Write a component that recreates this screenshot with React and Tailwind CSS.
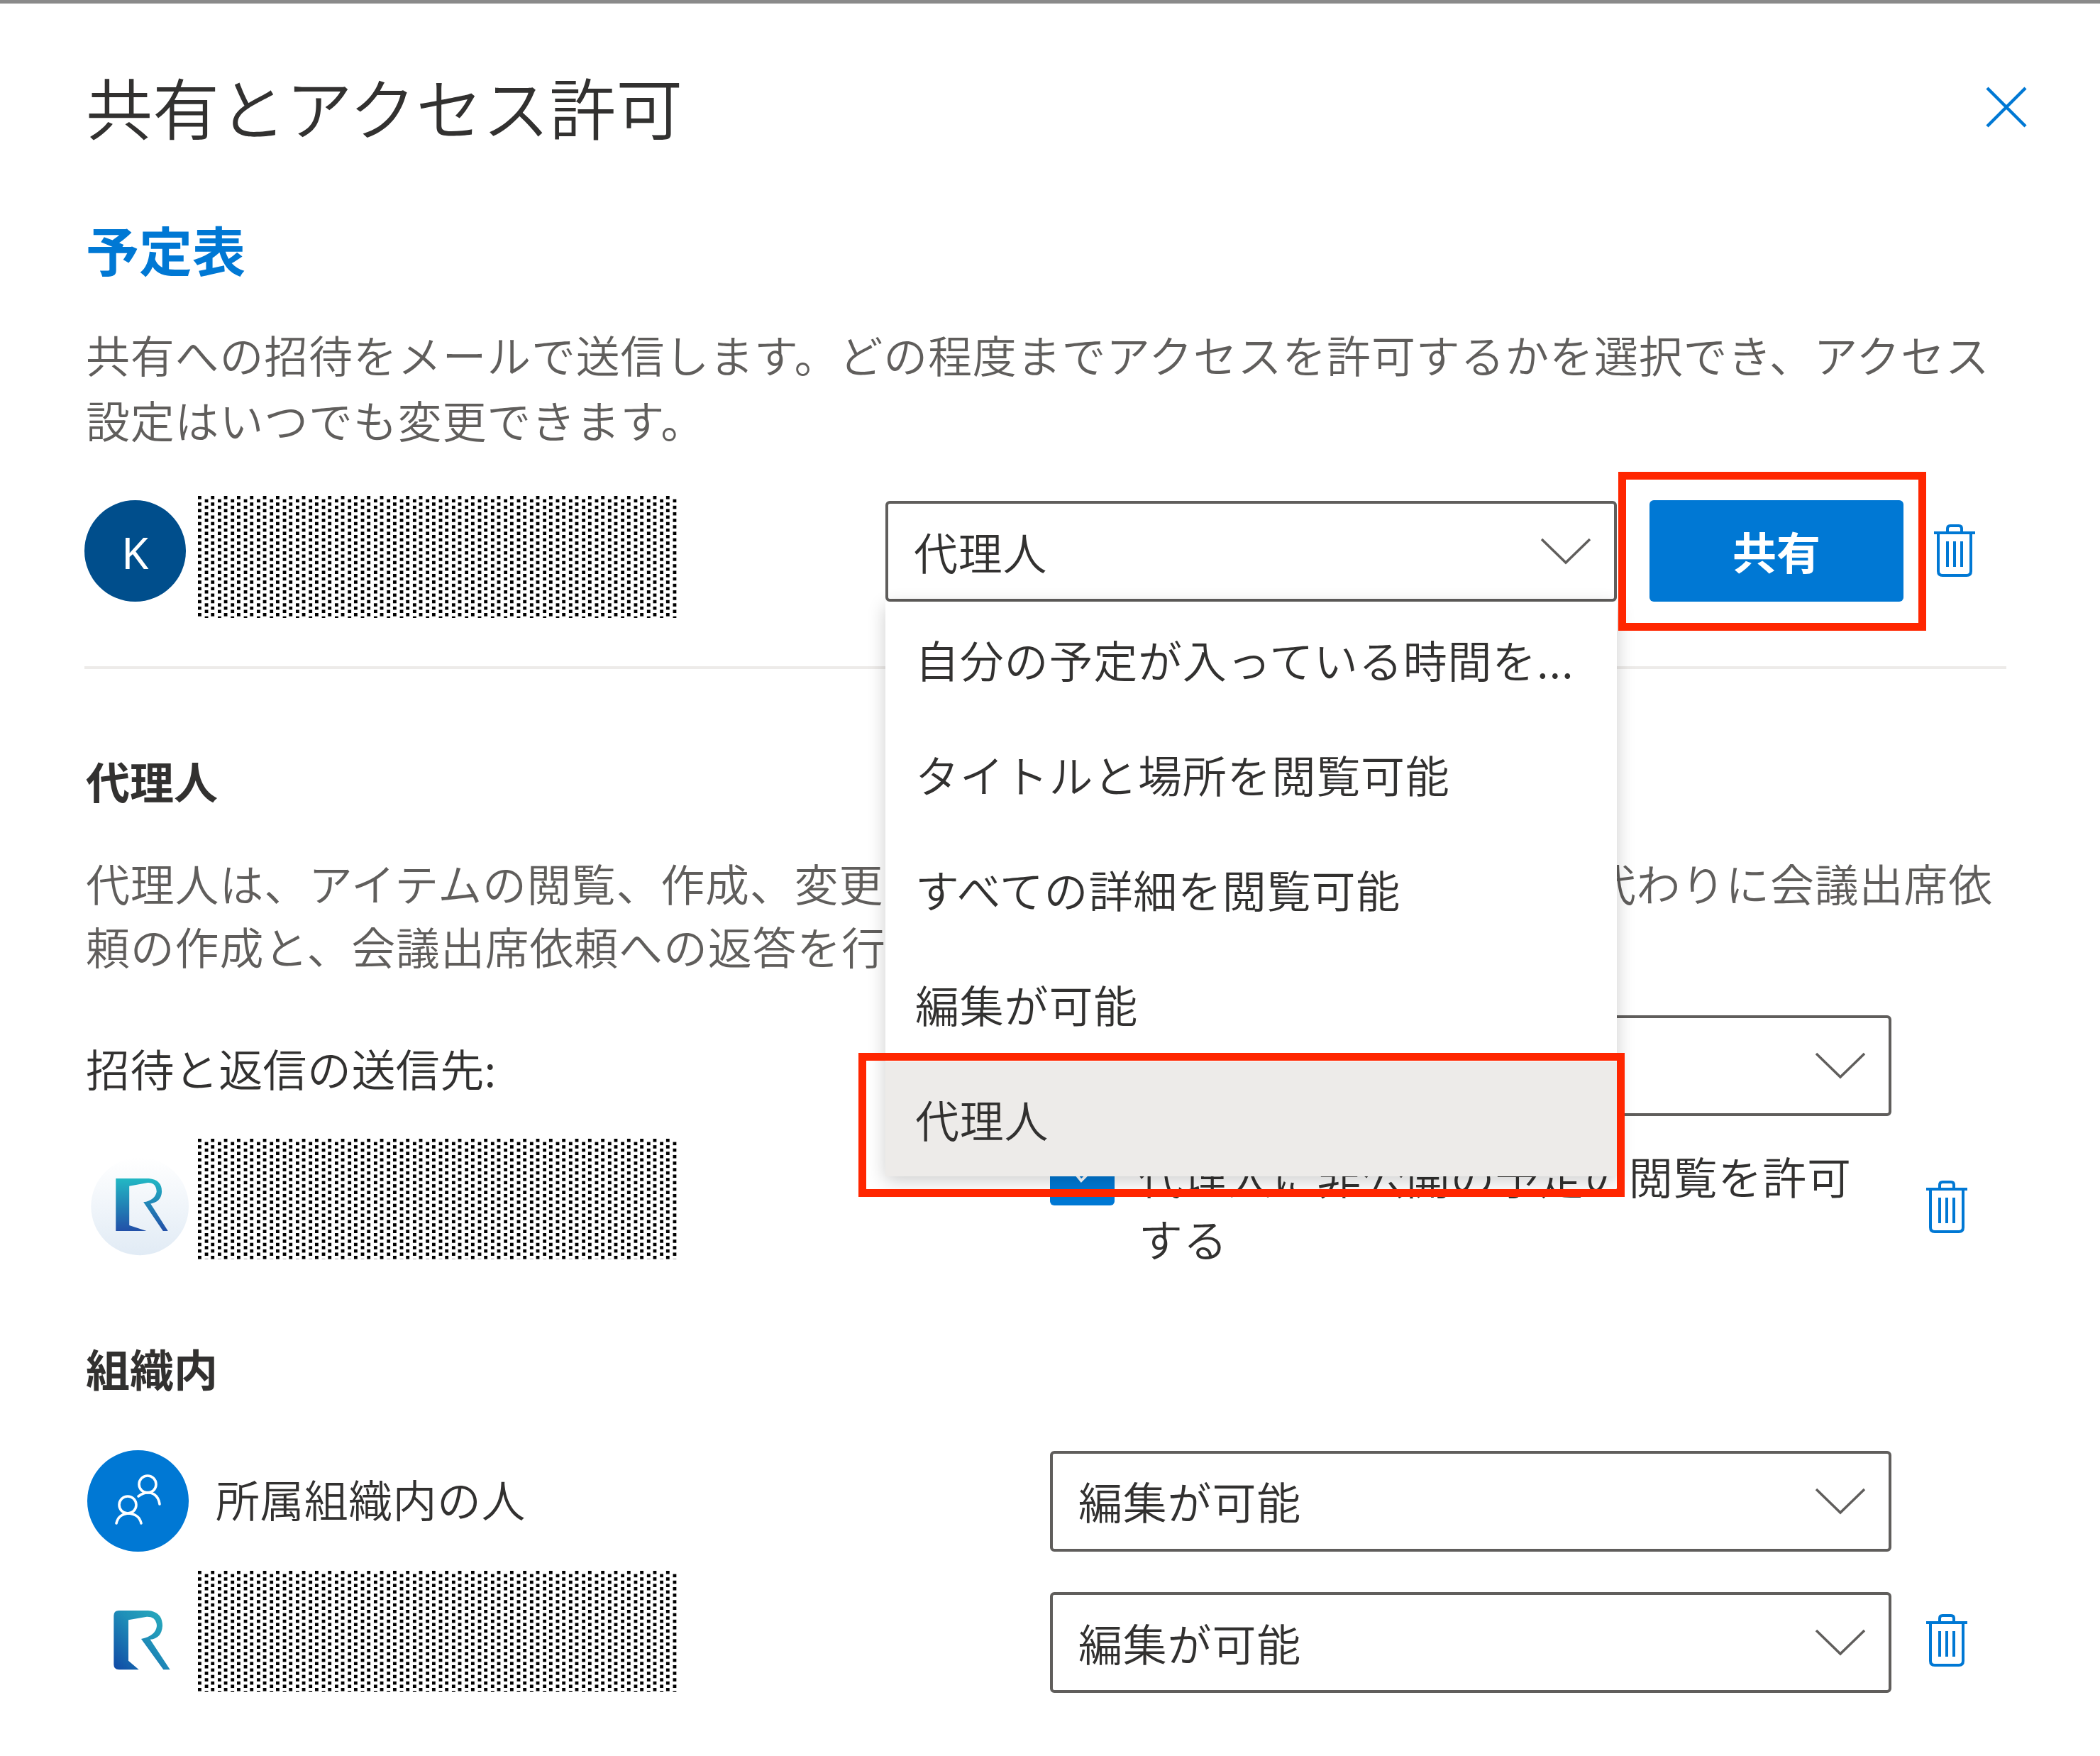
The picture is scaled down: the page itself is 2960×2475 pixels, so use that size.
import { useId } from 'react'

function Chevron() {
  return (
    <svg viewBox="0 0 72 38" className="w-[72px] h-[38px]" fill="none" stroke="#605e5c" strokeWidth="3.5">
      <path d="M2 2 L36 35 L70 2" />
    </svg>
  )
}

function Trash() {
  return (
    <svg viewBox="0 0 58 74" className="w-[58px] h-[74px] shrink-0" fill="none" stroke="#0078d4" strokeWidth="4">
      <path d="M0 12 H58" />
      <path d="M19 12 V6 Q19 2 23 2 H35 Q39 2 39 6 V12" />
      <path d="M6 12 V66 Q6 72 12 72 H46 Q52 72 52 66 V12" />
      <path d="M19 24 V60 M29 24 V60 M39 24 V60" />
    </svg>
  )
}

function Redacted({ className }) {
  const id = useId()
  return (
    <svg className={`w-[676px] shrink-0 bg-white ${className}`} width="676" height="172" shapeRendering="crispEdges">
      <defs>
        <pattern id={id} width="18.33" height="9.17" patternUnits="userSpaceOnUse">
          <rect x="0" y="0" width="5" height="5" fill="#000" />
          <rect x="9.17" y="4.58" width="5" height="5" fill="#000" />
        </pattern>
      </defs>
      <rect width="100%" height="100%" fill={`url(#${id})`} />
    </svg>
  )
}

function Select({ label, className = '', children }) {
  return (
    <div className={`relative h-[142px] border-[4px] border-[#605e5c] rounded-[6px] flex items-center justify-between pl-[36px] pr-[32px] bg-white text-[#323130] ${className}`}>
      <span>{label}</span>
      <Chevron />
      {children}
    </div>
  )
}

function LogoCircle() {
  const id = useId()
  return (
    <svg viewBox="130 160 430 420" className="w-[143px] h-[140px] shrink-0">
      <defs>
        <linearGradient id={id + 'a'} x1="0" y1="0" x2="0" y2="1">
          <stop offset="0" stopColor="#ffffff" />
          <stop offset="1" stopColor="#e1ebf5" />
        </linearGradient>
        <linearGradient id={id + 'b'} x1="0" y1="0" x2="0" y2="1">
          <stop offset="0" stopColor="#22b8c4" />
          <stop offset="1" stopColor="#2250a8" />
        </linearGradient>
      </defs>
      <circle cx="347" cy="368" r="207" fill={`url(#${id}a)`} />
      <path
        d="M245 250 H385 Q440 255 440 305 Q438 352 385 357 L362 350 Q412 342 418 305 Q415 266 380 268 L302 282 V448 L375 472 H245 Z M362 350 L388 350 L466 472 H445 Z"
        fill={`url(#${id}b)`}
      />
    </svg>
  )
}

function LogoPlain() {
  const id = useId()
  return (
    <svg viewBox="250 750 238 252" className="w-[80px] h-[84px] shrink-0">
      <defs>
        <linearGradient id={id} x1="0" y1="1" x2="1" y2="0">
          <stop offset="0" stopColor="#0f48a5" />
          <stop offset="0.55" stopColor="#1f8fb8" />
          <stop offset="1" stopColor="#2ab0bd" />
        </linearGradient>
      </defs>
      <path
        d="M272 750 H395 Q456 755 456 815 Q452 868 405 872 L366 870 Q428 856 432 815 Q430 775 390 776 L312 790 V962 L356 1000 H272 Q250 1000 250 978 V772 Q250 750 272 750 Z M366 870 L400 866 L488 1000 H460 Z"
        fill={`url(#${id})`}
      />
    </svg>
  )
}

function PeopleIcon() {
  return (
    <svg viewBox="0 0 143 143" className="w-[143px] h-[143px] shrink-0">
      <circle cx="71.5" cy="71.5" r="71.5" fill="#0078d4" />
      <g fill="none" stroke="#fff" strokeWidth="3.6" strokeLinecap="round">
        <circle cx="85" cy="48" r="12" />
        <path d="M72 65 Q84 56 94 62 Q101 67 102 76" />
        <circle cx="57" cy="77" r="12" />
        <path d="M41 103 Q44 90 58 89 Q73 90 76 103" />
      </g>
    </svg>
  )
}

const options = ['自分の予定が入っている時間を...', 'タイトルと場所を閲覧可能', 'すべての詳細を閲覧可能', '編集が可能', '代理人']

export default function App() {
  return (
    <div className="relative w-[2960px] h-[2475px] overflow-hidden bg-white border-t-[5px] border-[#8a8a8a] px-[119px] pt-[70px] text-[62px] font-[350] tracking-[0.8px] text-[#605e5c] font-['Noto_Sans_CJK_JP','Noto_Sans',sans-serif]">
      <div className="flex items-center justify-between h-[152px] pl-[2px]">
        <h1 className="text-[94px] font-[350] text-[#323130] leading-none tracking-normal -mt-[4px]">共有とアクセス許可</h1>
        <svg viewBox="0 0 58 58" className="w-[58px] h-[58px] mr-[-16px]" fill="none" stroke="#0078d4" strokeWidth="4.5">
          <path d="M2 2 L56 56 M56 2 L2 56" />
        </svg>
      </div>

      <h2 className="mt-[84px] h-[80px] pl-[2px] flex items-center text-[75px] font-bold text-[#0078d4] tracking-normal">予定表</h2>

      <p className="mt-[62px] pl-[2px] leading-[92px]">
        共有への招待をメールで送信します。どの程度までアクセスを許可するかを選択でき、アクセス設定はいつでも変更できます。
      </p>

      <div className="mt-[60px] flex h-[174px]">
        <div className="mt-[8px] w-[143px] h-[143px] pt-[4px] rounded-full bg-[#004e8c] text-white flex items-center justify-center font-['Noto_Sans',sans-serif] font-normal shrink-0">K</div>
        <Redacted className="ml-[17px] mt-[2px] h-[172px]" />
        <Select label="代理人" className="ml-[293px] mt-[9px] w-[1031px] z-10">
          <div className="absolute left-[-4px] right-[-4px] top-[138px] bg-white shadow-[0_6px_24px_rgba(0,0,0,0.2)]">
            {options.map((o, i) => (
              <div key={o} className={`h-[162px] flex items-center pl-[42px] pt-[1px] text-[#323130] ${i === 4 ? 'bg-[#edebe9]' : ''}`}>
                {o}
              </div>
            ))}
          </div>
        </Select>
        <button className="ml-[46px] mt-[8px] w-[358px] h-[143px] rounded-[6px] bg-[#0078d4] text-white font-semibold tracking-normal">共有</button>
        <div className="ml-[43px] mt-[42px]"><Trash /></div>
      </div>

      <div className="mt-[68px] h-[4px] bg-[#edebe9] w-[2709px]" />

      <h3 className="mt-[117px] h-[80px] pl-[2px] flex items-center font-semibold text-[#323130] tracking-normal">代理人</h3>
      <p className="mt-[60px] pl-[2px] leading-[89px]">
        代理人は、アイテムの閲覧、作成、変更、削除ができます。また、あなたの代わりに会議出席依頼の作成と、会議出席依頼への返答を行うことができます。
      </p>

      <div className="mt-[53px] grid grid-cols-[1361px_1186px] items-center">
        <span className="pl-[2px] mt-[6px] text-[#323130] tracking-[0.4px]">招待と返信の送信先:</span>
        <Select label="編集が可能" />
      </div>

      <div className="mt-[32px] flex h-[170px]">
        <div className="ml-[6px] mt-[26px]"><LogoCircle /></div>
        <Redacted className="ml-[11px] h-[170px]" />
        <div className="ml-[525px] mt-[4px] w-[91px] h-[90px] rounded-[6px] bg-[#0078d4] flex items-center justify-center shrink-0">
          <svg viewBox="0 0 60 40" className="w-[60px] h-[40px]" fill="none" stroke="#fff" strokeWidth="4">
            <path d="M10 8 L28 30 L50 8" />
          </svg>
        </div>
        <p className="ml-[34px] mt-[8px] w-[1040px] leading-[88px] text-[#323130]">代理人に非公開の予定の閲覧を許可する</p>
        <div className="ml-[70px] mt-[59px]"><Trash /></div>
      </div>

      <h3 className="mt-[113px] h-[80px] pl-[2px] flex items-center font-semibold text-[#323130] tracking-normal">組織内</h3>

      <div className="mt-[76px] grid grid-cols-[1361px_1186px] items-center">
        <div className="flex items-center gap-[38px] pl-[4px] text-[#323130] tracking-[0.4px]">
          <PeopleIcon />
          <span className="-mt-[6px]">所属組織内の人</span>
        </div>
        <Select label="編集が可能" />
      </div>

      <div className="mt-[27px] flex h-[171px]">
        <div className="ml-[41px] mt-[56px]"><LogoPlain /></div>
        <Redacted className="ml-[39px] h-[171px]" />
        <Select label="編集が可能" className="ml-[525px] mt-[30px] w-[1186px] shrink-0" />
        <div className="ml-[49px] mt-[61px]"><Trash /></div>
      </div>

      <div className="absolute z-20 left-[2281px] top-[660px] w-[434px] h-[224px] border-[11px] border-[#ff2600]" />
      <div className="absolute z-20 left-[1210px] top-[1479px] w-[1080px] h-[203px] border-[11px] border-[#ff2600]" />
    </div>
  )
}
